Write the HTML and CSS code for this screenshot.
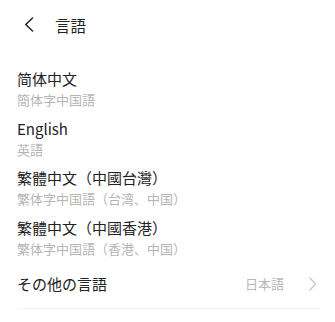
FILE: index.html
```html
<!DOCTYPE html>
<html lang="ja">
<head>
<meta charset="utf-8">
<link rel="stylesheet" href="styles.css">
</head>
<body>
<div class="page">
  <header class="bar">
    <span class="back">
      <svg width="10" height="15" viewBox="0 0 10 15"><path d="M8.5 1 L1.8 7.5 L8.5 14" fill="none" stroke="#222" stroke-width="1.5" stroke-linecap="round" stroke-linejoin="round"/></svg>
    </span>
    <span class="title">言語</span>
  </header>
  <ul class="list">
    <li class="item"><div class="name">简体中文</div><div class="sub">簡体字中国語</div></li>
    <li class="item"><div class="name">English</div><div class="sub">英語</div></li>
    <li class="item"><div class="name">繁體中文（中國台灣）</div><div class="sub">繁体字中国語（台湾、中国）</div></li>
    <li class="item"><div class="name">繁體中文（中國香港）</div><div class="sub">繁体字中国語（香港、中国）</div></li>
  </ul>
  <div class="other">
    <span class="name">その他の言語</span>
    <span class="value">日本語</span>
    <svg class="chev" width="8" height="14" viewBox="0 0 8 14"><path d="M1 1 L6.5 7 L1 13" fill="none" stroke="#c6c6c6" stroke-width="1.2" stroke-linecap="round" stroke-linejoin="round"/></svg>
  </div>
</div>
</body>
</html>
```
FILE: styles.css
```css
html, body {
  margin: 0;
  padding: 0;
  background: #ffffff;
}
body {
  font-family: "Noto Sans CJK SC", "Noto Sans", sans-serif;
  color: #222222;
}
.page {
  width: 335px;
  height: 322px;
  overflow: hidden;
}
.bar {
  height: 49px;
  display: flex;
  align-items: center;
  padding-left: 24px;
  box-sizing: border-box;
}
.back {
  display: flex;
  width: 10px;
  height: 15px;
  margin-right: 21px;
}
.title {
  font-size: 15.5px;
  line-height: 22px;
  color: #222;
}
.list {
  list-style: none;
  margin: 0;
  padding: 19px 0 0 17px;
}
.item {
  height: 49.5px;
}
.name {
  font-size: 15px;
  line-height: 22px;
  color: #222;
}
.sub {
  font-size: 13px;
  line-height: 18px;
  margin-top: 1px;
  color: #b5b5b5;
}
.other {
  display: flex;
  align-items: flex-start;
  margin: 7px 15px 0 17px;
  height: 35px;
  border-bottom: 1px solid #f3f3f3;
}
.other .name {
  flex: 1;
}
.value {
  font-size: 13px;
  line-height: 22px;
  color: #b9b9b9;
  margin-right: 25px;
}
.chev {
  margin-top: 4px;
  margin-right: 3px;
}
```
